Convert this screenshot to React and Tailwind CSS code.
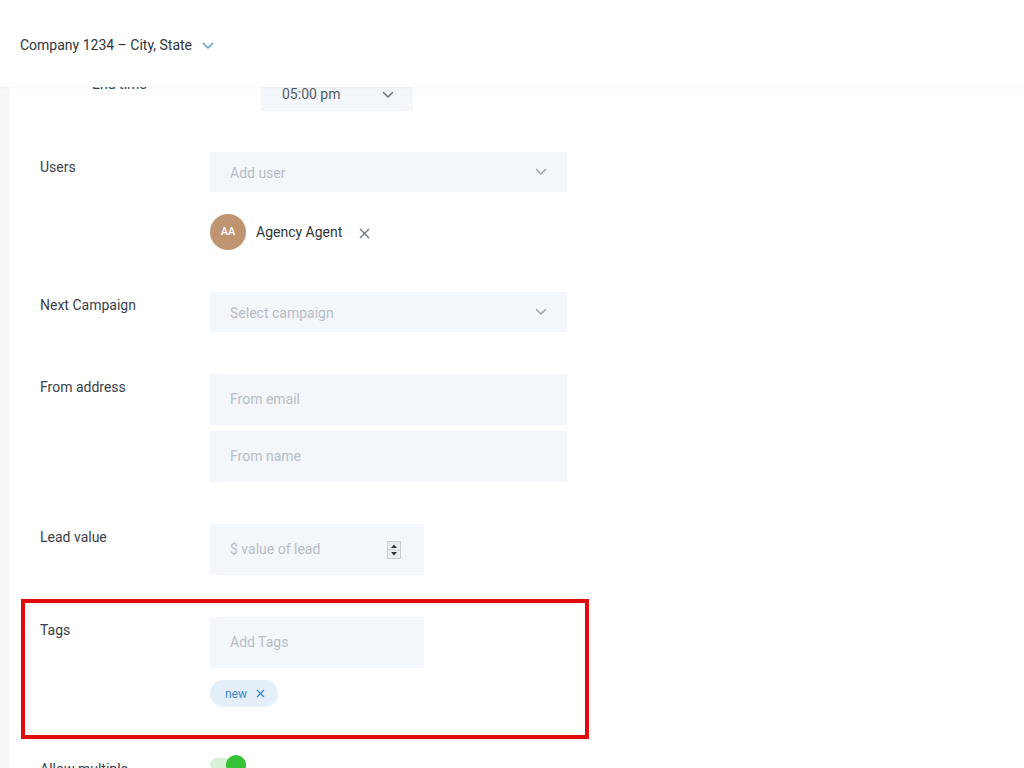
import React from 'react';

const Chevron = ({ className = '' }) => (
  <svg width="12" height="8" viewBox="0 0 12 8" className={className} fill="none">
    <path d="M1.5 1.5 6 6l4.5-4.5" stroke="currentColor" strokeWidth="1.5" strokeLinecap="round" strokeLinejoin="round" />
  </svg>
);

const Label = ({ children }) => (
  <div className="w-[170px] shrink-0 pt-[3px] text-[14px] leading-5 text-[#3a4149]">{children}</div>
);

const SelectBox = ({ placeholder }) => (
  <div className="flex h-10 w-[357px] items-center justify-between bg-[#f3f6fa] pl-5 pr-5">
    <span className="pt-[3px] text-[14px] text-[#b8bec6]">{placeholder}</span>
    <Chevron className="text-[#9aa3ad]" />
  </div>
);

const TextBox = ({ placeholder, width = 'w-[357px]', children }) => (
  <div className={`flex h-[51px] items-center justify-between bg-[#f3f6fa] pl-5 pr-5 ${width}`}>
    <span className="text-[14px] text-[#b8bec6]">{placeholder}</span>
    {children}
  </div>
);

export default function App() {
  return (
    <div className="relative h-[768px] w-[1024px] overflow-hidden bg-white font-['Roboto',sans-serif]">
      {/* Top bar, lies over the scrolled form */}
      <div className="absolute left-0 right-0 top-0 z-10 flex h-[87px] items-center bg-white pl-5 pt-[4px] shadow-[0_1px_3px_rgba(0,0,0,0.04)]">
        <span className="text-[14px] text-[#2f353b]">Company 1234 – City, State</span>
        <Chevron className="ml-[10px] text-[#5b9bd1]" />
      </div>

      <div className="flex h-full">
        <div className="w-[10px] shrink-0 bg-[#f5f7f9]" />

        <div className="flex-1 pl-[11px]">
          {/* End time */}
          <div className="flex pt-[78px] pl-[71px]">
            <div className="w-[169px] shrink-0 -mt-[4px] text-[14px] leading-5 text-[#3a4149]">End time</div>
            <div className="flex h-[33px] w-[152px] items-center justify-between bg-[#f3f6fa] pl-[21px] pr-[19px]">
              <span className="text-[14px] text-[#555d66]">05:00 pm</span>
              <Chevron className="text-[#6b737c]" />
            </div>
          </div>

          {/* Users */}
          <div className="mt-[41px] flex pl-[19px]">
            <div className="w-[170px] shrink-0 pt-[5px] text-[14px] leading-5 text-[#3a4149]">Users</div>
            <div>
              <SelectBox placeholder="Add user" />
              <div className="mt-[22px] flex items-center">
                <div className="flex h-9 w-9 items-center justify-center rounded-full bg-[#be9471] text-[11px] font-medium text-white">
                  AA
                </div>
                <span className="ml-[10px] text-[14px] text-[#2f353b]">Agency Agent</span>
                <svg width="11" height="11" viewBox="0 0 11 11" className="ml-[17px] mt-[3px] text-[#6b737c]">
                  <path d="M1 1l9 9M10 1l-9 9" stroke="currentColor" strokeWidth="1.3" />
                </svg>
              </div>
            </div>
          </div>

          {/* Next Campaign */}
          <div className="mt-[42px] flex pl-[19px]">
            <Label>Next Campaign</Label>
            <SelectBox placeholder="Select campaign" />
          </div>

          {/* From address */}
          <div className="mt-[42px] flex pl-[19px]">
            <Label>From address</Label>
            <div className="flex flex-col gap-[6px]">
              <TextBox placeholder="From email" />
              <TextBox placeholder="From name" />
            </div>
          </div>

          {/* Lead value */}
          <div className="mt-[42px] flex pl-[19px]">
            <Label>Lead value</Label>
            <TextBox placeholder="$ value of lead" width="w-[214px]">
              <svg width="16" height="18" viewBox="0 0 16 18" className="mr-[2px]">
                <rect x="1.5" y="0.5" width="13" height="17" fill="#e9edf1" stroke="#c9ced4" />
                <line x1="1.5" y1="9" x2="14.5" y2="9" stroke="#c9ced4" />
                <path d="M8 3.5l3 3.5H5z" fill="#333" />
                <path d="M8 14.5l3-3.5H5z" fill="#333" />
              </svg>
            </TextBox>
          </div>

          {/* Tags (highlighted) */}
          <div className="mt-6 w-[568px] border-4 border-[#e10b0b] pl-[15px] pt-[14px] pb-[28px]">
            <div className="flex">
              <Label>Tags</Label>
              <div>
                <TextBox placeholder="Add Tags" width="w-[214px]" />
                <div className="mt-3 inline-flex h-[27px] items-center rounded-full bg-[#e4effa] pl-[15px] pr-[13px]">
                  <span className="text-[12px] text-[#3b87cf]">new</span>
                  <svg width="9" height="9" viewBox="0 0 9 9" className="ml-[9px] text-[#3b87cf]">
                    <path d="M1 1l7 7M8 1l-7 7" stroke="currentColor" strokeWidth="1.3" />
                  </svg>
                </div>
              </div>
            </div>
          </div>

          {/* Allow multiple */}
          <div className="mt-4 flex pl-[19px]">
            <div className="w-[170px] shrink-0 pt-[4px] text-[14px] leading-5 text-[#3a4149]">Allow multiple</div>
            <div className="relative h-[20px] w-[36px]">
              <div className="absolute left-0 top-[3px] h-[14px] w-[36px] rounded-full bg-[#d6f1d6]" />
              <div className="absolute right-0 top-0 h-5 w-5 rounded-full bg-[#36c236]" />
            </div>
          </div>
        </div>
      </div>
    </div>
  );
}
